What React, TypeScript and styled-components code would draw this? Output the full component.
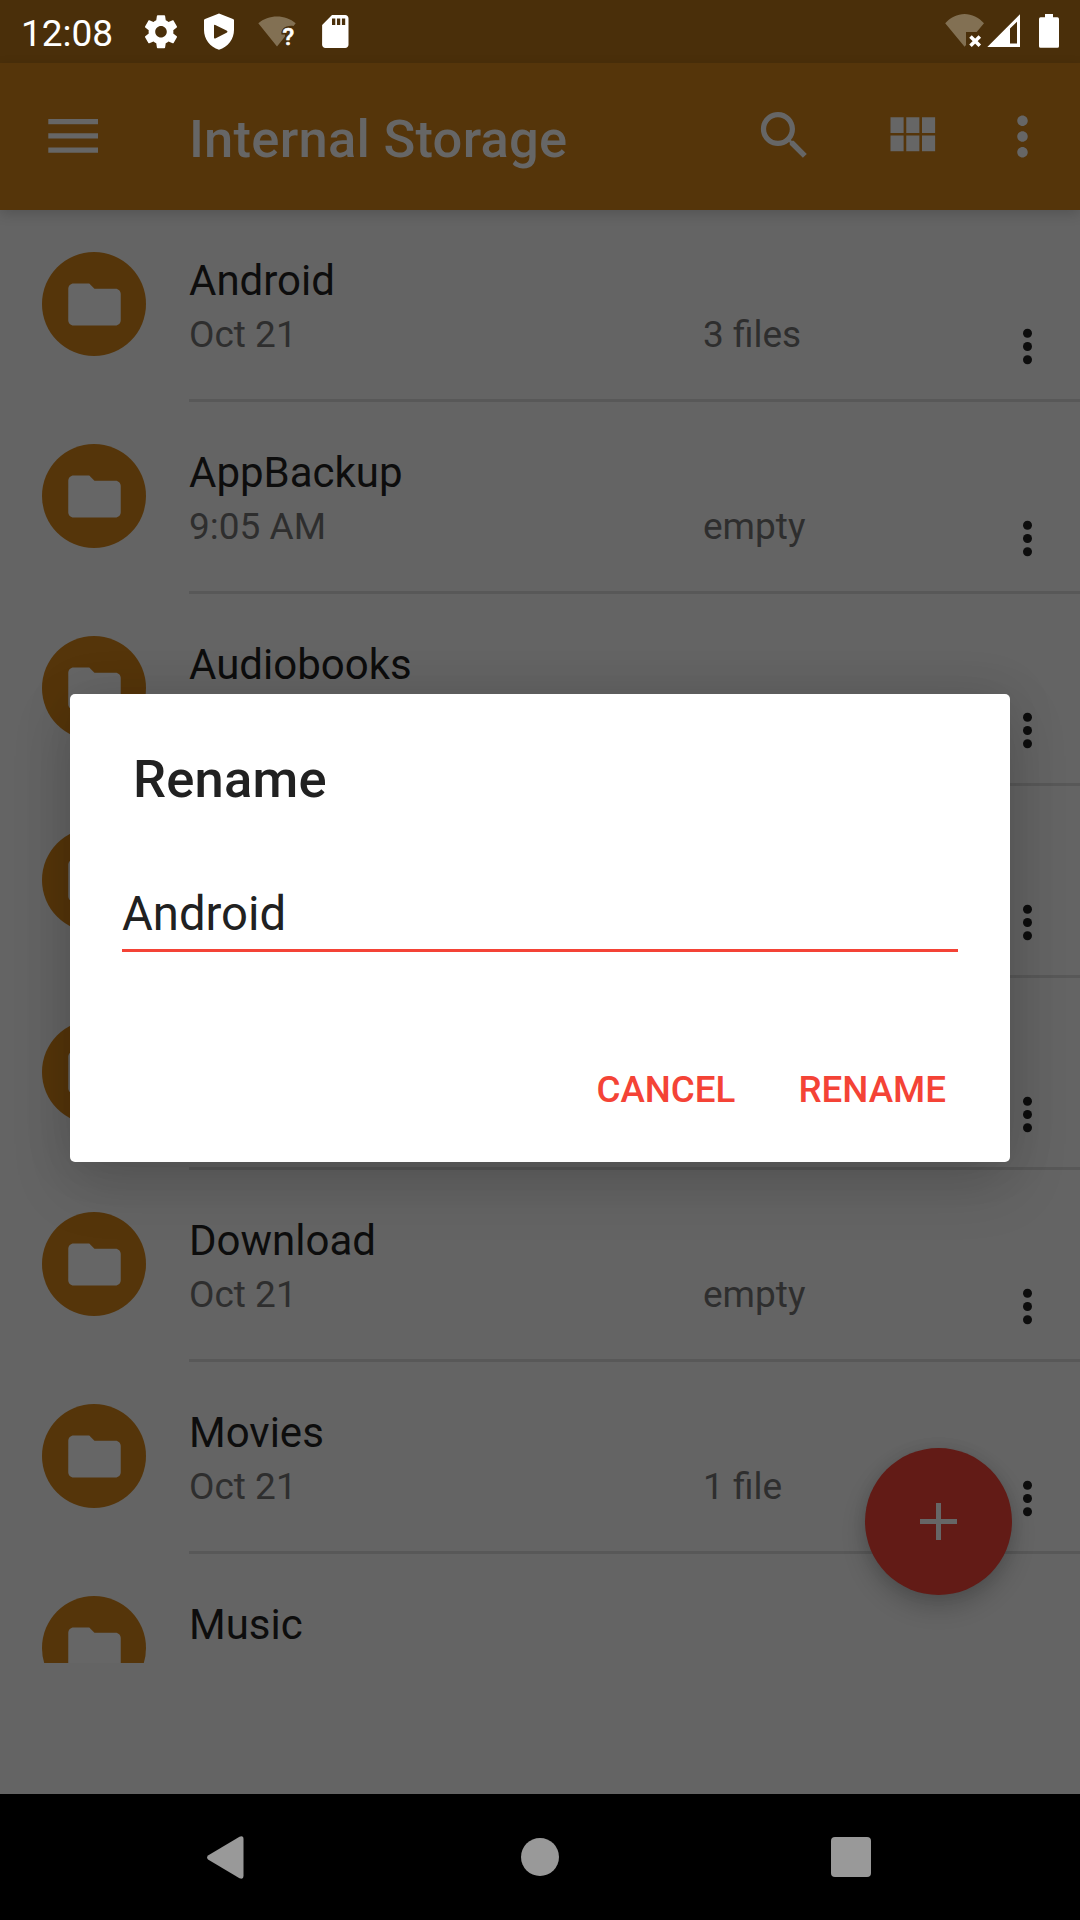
import React from "react";
import styled, { createGlobalStyle } from "styled-components";

const color = {
  status: "#4a2f0a",
  primary: "#55350a",
  surface: "#646464",
  onPrimary: "#666666",
  text: "#0d0d0d",
  muted: "#2e2e2e",
  divider: "#585858",
  fab: "#621b16",
  accent: "#f44336",
  ink: "#212121",
};

const GlobalStyle = createGlobalStyle`
  *, *::before, *::after { box-sizing: border-box; }
  body { margin: 0; background: #000; }
  svg { display: block; flex: none; }
`;

const Screen = styled.div`
  position: relative;
  width: 1080px;
  height: 1920px;
  display: flex;
  flex-direction: column;
  overflow: hidden;
  background: ${color.surface};
  font-family: Roboto, "Noto Sans", sans-serif;
`;

const StatusBar = styled.div`
  flex: none;
  height: 63px;
  padding: 0 21px;
  display: flex;
  align-items: flex-start;
  justify-content: space-between;
  background: ${color.status};
  color: #fff;
`;

const StatusGroup = styled.div`
  display: flex;
  align-items: flex-start;
`;

const Clock = styled.span`
  width: 120px;
  padding-top: 12px;
  font-size: 37px;
  line-height: 44px;
`;

const StatusSlot = styled.span<{ $width: number }>`
  width: ${(p) => p.$width}px;
  flex: none;
`;

const AppBar = styled.header`
  flex: none;
  height: 147px;
  padding: 0 26px 0 48px;
  display: flex;
  align-items: center;
  background: ${color.primary};
  color: ${color.onPrimary};
  box-shadow: 0 4px 12px rgba(0, 0, 0, 0.16);
  z-index: 1;
`;

const MenuButton = styled.span`
  width: 141px;
  padding-bottom: 1px;
`;

const Title = styled.h1`
  flex: 1;
  margin: 0;
  padding-top: 4px;
  font-size: 52.5px;
  font-weight: 500;
  line-height: 62px;
  letter-spacing: 0.25px;
`;

const Actions = styled.div`
  display: flex;
  align-items: flex-start;
  padding-bottom: 1px;
`;

const Action = styled.span<{ $gap: number; $drop?: number }>`
  margin-left: ${(p) => p.$gap}px;
  padding-top: ${(p) => p.$drop ?? 0}px;
`;

const FileList = styled.div`
  flex: none;
  height: 1453px;
  overflow: hidden;
`;

const Row = styled.div`
  height: 192px;
  padding-left: 42px;
  display: flex;
`;

const FolderBadge = styled.div`
  flex: none;
  width: 104px;
  height: 104px;
  margin: 42px 43px 0 0;
  border-radius: 50%;
  display: grid;
  place-items: center;
  background: ${color.primary};
  color: ${color.onPrimary};
`;

const RowBody = styled.div`
  flex: 1;
  display: flex;
  border-bottom: 3px solid ${color.divider};
`;

const RowText = styled.div`
  flex: 1;
  padding-top: 46px;
`;

const FileName = styled.div`
  font-size: 42px;
  line-height: 50px;
  color: ${color.text};
`;

const Meta = styled.div`
  margin-top: 7px;
  display: grid;
  grid-template-columns: 514px 1fr;
  font-size: 37px;
  line-height: 44px;
  color: ${color.muted};
`;

const RowMenu = styled.span`
  align-self: flex-end;
  margin: 0 47px 34px 0;
  color: ${color.text};
`;

const Fab = styled.div`
  position: absolute;
  right: 68px;
  bottom: 325px;
  width: 147px;
  height: 147px;
  border-radius: 50%;
  display: grid;
  place-items: center;
  background: ${color.fab};
  color: ${color.onPrimary};
  box-shadow: 0 12px 24px rgba(0, 0, 0, 0.2), 0 0 14px rgba(0, 0, 0, 0.08);
`;

const NavBar = styled.nav`
  flex: none;
  height: 126px;
  margin-top: auto;
  padding: 0 209px 0 207px;
  display: grid;
  grid-template-columns: 313px 1fr auto;
  align-items: center;
  background: #000;
  color: #999;
`;

const Dialog = styled.div`
  position: absolute;
  left: 70px;
  top: 694px;
  z-index: 2;
  width: 940px;
  height: 468px;
  padding: 52px 52px 0;
  border-radius: 5px;
  display: flex;
  flex-direction: column;
  background: #fff;
  color: ${color.ink};
  box-shadow: 0 22px 60px rgba(0, 0, 0, 0.15), 0 0 50px rgba(0, 0, 0, 0.1);
`;

const DialogTitle = styled.h2`
  margin: 0;
  padding: 2px 0 0 11px;
  font-size: 52.5px;
  font-weight: 500;
  line-height: 62px;
  letter-spacing: 0.2px;
`;

const Field = styled.div`
  height: 66px;
  margin-top: 76px;
  border-bottom: 3px solid ${color.accent};
  font-size: 47.25px;
  line-height: 56px;
`;

const DialogActions = styled.div`
  margin-top: 116px;
  padding-right: 12px;
  display: flex;
  justify-content: flex-end;
  gap: 63px;
`;

const TextButton = styled.span`
  font-size: 36.75px;
  font-weight: 500;
  line-height: 44px;
  color: ${color.accent};
`;

const Material = ({ d, size = 63 }: { d: string; size?: number }) => (
  <svg width={size} height={size} viewBox="0 0 24 24" fill="currentColor">
    <path d={d} />
  </svg>
);

const icons = {
  folder: "M10 4H4c-1.1 0-1.99.9-1.99 2L2 18c0 1.1.9 2 2 2h16c1.1 0 2-.9 2-2V8c0-1.1-.9-2-2-2h-8l-2-2z",
  search:
    "M15.5 14h-.79l-.28-.27C15.41 12.59 16 11.11 16 9.5 16 5.91 13.09 3 9.5 3S3 5.91 3 9.5 5.91 16 9.5 16c1.61 0 3.09-.59 4.23-1.57l.27.28v.79l5 4.99L20.49 19l-4.99-5zm-6 0C7.01 14 5 11.99 5 9.5S7.01 5 9.5 5 14 7.01 14 9.5 11.99 14 9.5 14z",
  grid: "M4 11h5V5H4v6zm0 7h5v-6H4v6zm6 0h5v-6h-5v6zm6 0h5v-6h-5v6zm-6-7h5V5h-5v6zm6-6v6h5V5h-5z",
  more: "M12 8c1.1 0 2-.9 2-2s-.9-2-2-2-2 .9-2 2 .9 2 2 2zm0 2c-1.1 0-2 .9-2 2s.9 2 2 2 2-.9 2-2-.9-2-2-2zm0 6c-1.1 0-2 .9-2 2s.9 2 2 2 2-.9 2-2-.9-2-2-2z",
};

const NotificationIcons = () => (
  <>
    <StatusSlot $width={59}>
      <svg width="40" height="63" viewBox="141 0 40 63" fill="#fff">
        <path
          transform="translate(141.2 12) scale(1.65)"
          d="M19.43 12.98c.04-.32.07-.64.07-.98s-.03-.66-.07-.98l2.11-1.65c.19-.15.24-.42.12-.64l-2-3.46c-.12-.22-.39-.3-.61-.22l-2.49 1c-.52-.4-1.08-.73-1.69-.98l-.38-2.65C14.46 2.18 14.25 2 14 2h-4c-.25 0-.46.18-.49.42l-.38 2.65c-.61.25-1.17.59-1.69.98l-2.49-1c-.23-.09-.49 0-.61.22l-2 3.46c-.13.22-.07.49.12.64l2.11 1.65c-.04.32-.07.65-.07.98s.03.66.07.98l-2.11 1.65c-.19.15-.24.42-.12.64l2 3.46c.12.22.39.3.61.22l2.49-1c.52.4 1.08.73 1.69.98l.38 2.65c.03.24.24.42.49.42h4c.25 0 .46-.18.49-.42l.38-2.65c.61-.25 1.17-.59 1.69-.98l2.49 1c.23.09.49 0 .61-.22l2-3.46c.12-.22.07-.49-.12-.64l-2.11-1.65zM12 15.5c-1.93 0-3.5-1.57-3.5-3.5s1.57-3.5 3.5-3.5 3.5 1.57 3.5 3.5-1.57 3.5-3.5 3.5z"
        />
      </svg>
    </StatusSlot>
    <StatusSlot $width={56}>
      <svg width="40" height="63" viewBox="200 0 40 63" fill="#fff">
        <path
          fillRule="evenodd"
          d="M219 13.6 233 18.900Q234 19.300 234 20.500V30c0 9-6 17-15 19.7C210 47 204 39 204 30V20.500Q204 19.300 205 18.900zM214 25.600v12Q214 39 215.300 38.400L227 32.600Q228 31.700 227 30.800L215.300 24.900Q214 24.400 214 25.600z"
        />
      </svg>
    </StatusSlot>
    <StatusSlot $width={62}>
      <svg width="44" height="63" viewBox="256 0 44 63">
        <path
          fill="#827053"
          d="M277 46.5 258.3 23.3C263.5 19 270 16.6 277 16.6S290.500 19 295.700 23.300L293.500 26C285 25 280.500 29.500 281.500 34.500H285V36.500z"
        />
        <text x="288.300" y="45" textAnchor="middle" fill="#fff" stroke="#fff" strokeWidth="0.600" fontSize="24" fontWeight="500" fontFamily="Roboto">
          ?
        </text>
      </svg>
    </StatusSlot>
    <svg width="40" height="63" viewBox="318 0 40 63" fill="#fff">
      <path
        transform="translate(315.5 11.800) scale(1.65)"
        d="M18 2h-8L4.020 8 4 20c0 1.100.9 2 2 2h12c1.100 0 2-.9 2-2V4c0-1.100-.9-2-2-2zm-6 6h-2V4h2v4zm3 0h-2V4h2v4zm3 0h-2V4h2v4z"
      />
    </svg>
  </>
);

const SystemIcons = () => (
  <>
    <StatusSlot $width={42}>
      <svg width="42" height="63" viewBox="944 0 42 63">
        <path fill="#827053" d="M964.600 46.700 945.200 23.200C950.500 17.500 957.300 14 964.600 14S978.700 17.500 984 23.200L976.700 32H966V45z" />
        <path d="M970.500 36.500 979.800 45.800M979.800 36.500 970.500 45.800" stroke="#fff" strokeWidth="3.600" />
      </svg>
    </StatusSlot>
    <StatusSlot $width={52}>
      <svg width="36" height="63" viewBox="986 0 36 63" fill="#fff">
        <path fillRule="evenodd" d="M987.300 47 1020 14.300V47zM1010 28.500V43.600H1017V21.800z" />
      </svg>
    </StatusSlot>
    <svg width="21" height="63" viewBox="1038 0 21 63" fill="#fff">
      <path d="M1045 14h8v3.300h4.400a1.600 1.600 0 0 1 1.600 1.600V46.200a1.600 1.600 0 0 1-1.600 1.600H1040.600a1.600 1.600 0 0 1-1.600-1.600V18.900a1.600 1.600 0 0 1 1.600-1.600H1045z" />
    </svg>
  </>
);

type FileEntry = { name?: string; date?: string; size?: string };

const files: FileEntry[] = [
  { name: "Android", date: "Oct 21", size: "3 files" },
  { name: "AppBackup", date: "9:05 AM", size: "empty" },
  { name: "Audiobooks" },
  {},
  {},
  { name: "Download", date: "Oct 21", size: "empty" },
  { name: "Movies", date: "Oct 21", size: "1 file" },
  { name: "Music" },
];

const FileRow = ({ name, date, size }: FileEntry) => (
  <Row>
    <FolderBadge>
      <Material d={icons.folder} />
    </FolderBadge>
    <RowBody>
      <RowText>
        {name && <FileName>{name}</FileName>}
        {date && (
          <Meta>
            <span>{date}</span>
            <span>{size}</span>
          </Meta>
        )}
      </RowText>
      <RowMenu>
        <svg width="11" height="37" viewBox="0 0 11 37" fill="currentColor">
          <circle cx="5.500" cy="5.300" r="4.500" />
          <circle cx="5.500" cy="18.500" r="4.500" />
          <circle cx="5.500" cy="31.700" r="4.500" />
        </svg>
      </RowMenu>
    </RowBody>
  </Row>
);

export default function App() {
  return (
    <Screen>
      <GlobalStyle />
      <StatusBar>
        <StatusGroup>
          <Clock>12:08</Clock>
          <NotificationIcons />
        </StatusGroup>
        <StatusGroup>
          <SystemIcons />
        </StatusGroup>
      </StatusBar>
      <AppBar>
        <MenuButton>
          <svg width="50" height="34" viewBox="0 0 50 34" fill="currentColor">
            <path d="M.3 0H50v5.300H.3zM.3 14.200H50v5.300H.3zM.3 28.400H50v5.300H.3z" />
          </svg>
        </MenuButton>
        <Title>Internal Storage</Title>
        <Actions>
          <Action $gap={0}>
            <Material d={icons.search} />
          </Action>
          <Action $gap={64}>
            <Material d={icons.grid} />
          </Action>
          <Action $gap={48} $drop={1}>
            <Material d={icons.more} />
          </Action>
        </Actions>
      </AppBar>
      <FileList>
        {files.map((file, i) => (
          <FileRow key={i} {...file} />
        ))}
      </FileList>
      <NavBar>
        <svg width="37" height="43" viewBox="0 0 37 43" fill="currentColor">
          <path d="M1 19.500 32.500.7Q36.500-.8 36.500 3V40Q36.500 43.800 32.500 42.300L1 23.500Q-.8 21.500 1 19.500z" />
        </svg>
        <svg width="40" height="40" viewBox="0 0 40 40" fill="currentColor">
          <circle cx="20" cy="20" r="19" />
        </svg>
        <svg width="40" height="40" viewBox="0 0 40 40" fill="currentColor">
          <rect width="40" height="40" rx="4" />
        </svg>
      </NavBar>
      <Fab>
        <svg width="37" height="37" viewBox="0 0 37 37" fill="currentColor">
          <path d="M16 0h5v16h16v5H21v16h-5V21H0v-5h16z" />
        </svg>
      </Fab>
      <Dialog>
        <DialogTitle>Rename</DialogTitle>
        <Field>Android</Field>
        <DialogActions>
          <TextButton>CANCEL</TextButton>
          <TextButton>RENAME</TextButton>
        </DialogActions>
      </Dialog>
    </Screen>
  );
}
